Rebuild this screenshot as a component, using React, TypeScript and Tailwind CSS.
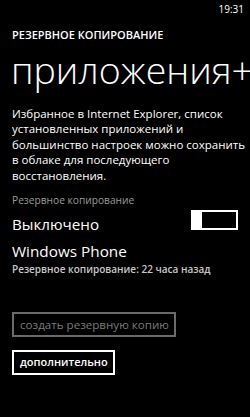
export default function App() {
  return (
    <div className="w-[250px] h-[417px] bg-black text-white overflow-hidden flex flex-col" style={{ fontFamily: '"Open Sans", "Noto Sans", sans-serif' }}>
      <div className="h-[16px] flex justify-end items-center pr-[6px] text-[10px] leading-none pt-[1px]">19:31</div>
      <div className="pl-[12px] pt-[12px] text-[11px] font-semibold leading-[14px] whitespace-nowrap">РЕЗЕРВНОЕ КОПИРОВАНИЕ</div>
      <div className="pl-[11px] mt-[6px] text-[37.5px] font-light leading-[44px] whitespace-nowrap">приложения+настройки</div>
      <div className="px-[12px] mt-[14px] text-[11.5px] leading-[15.4px] whitespace-nowrap">
        Избранное в Internet Explorer, список<br />
        установленных приложений и<br />
        большинство настроек можно сохранить<br />
        в облаке для последующего<br />
        восстановления.
      </div>
      <div className="px-[12px] mt-[10px] text-[10.2px] leading-[14px] text-[#9a9a9a]">Резервное копирование</div>
      <div className="px-[12px] flex items-start justify-between mt-[6px]">
        <div className="text-[15.2px] leading-[22px]">Выключено</div>
        <div className="flex items-center mt-[-3px]">
          <div className="w-[11px] h-[20px] bg-white" />
          <div className="w-[36px] h-[20px] border-2 border-white border-l-0" />
        </div>
      </div>
      <div className="px-[12px] mt-[6px] text-[15.3px] leading-[21px]">Windows Phone</div>
      <div className="px-[12px] text-[10px] leading-[14px] font-semibold text-[#c8c8c8]">Резервное копирование: 22 часа назад</div>
      <div className="px-[12px] mt-[36px] flex">
        <div className="h-[25px] w-[164px] border-2 border-[#6a6a6a] text-[#7a7a7a] text-[11.6px] flex items-center pl-[6px] whitespace-nowrap">создать резервную копию</div>
      </div>
      <div className="px-[12px] mt-[13px] flex">
        <div className="h-[25px] w-[103px] border-2 border-white text-white font-semibold text-[11px] flex items-center pl-[6px] whitespace-nowrap">дополнительно</div>
      </div>
    </div>
  );
}
